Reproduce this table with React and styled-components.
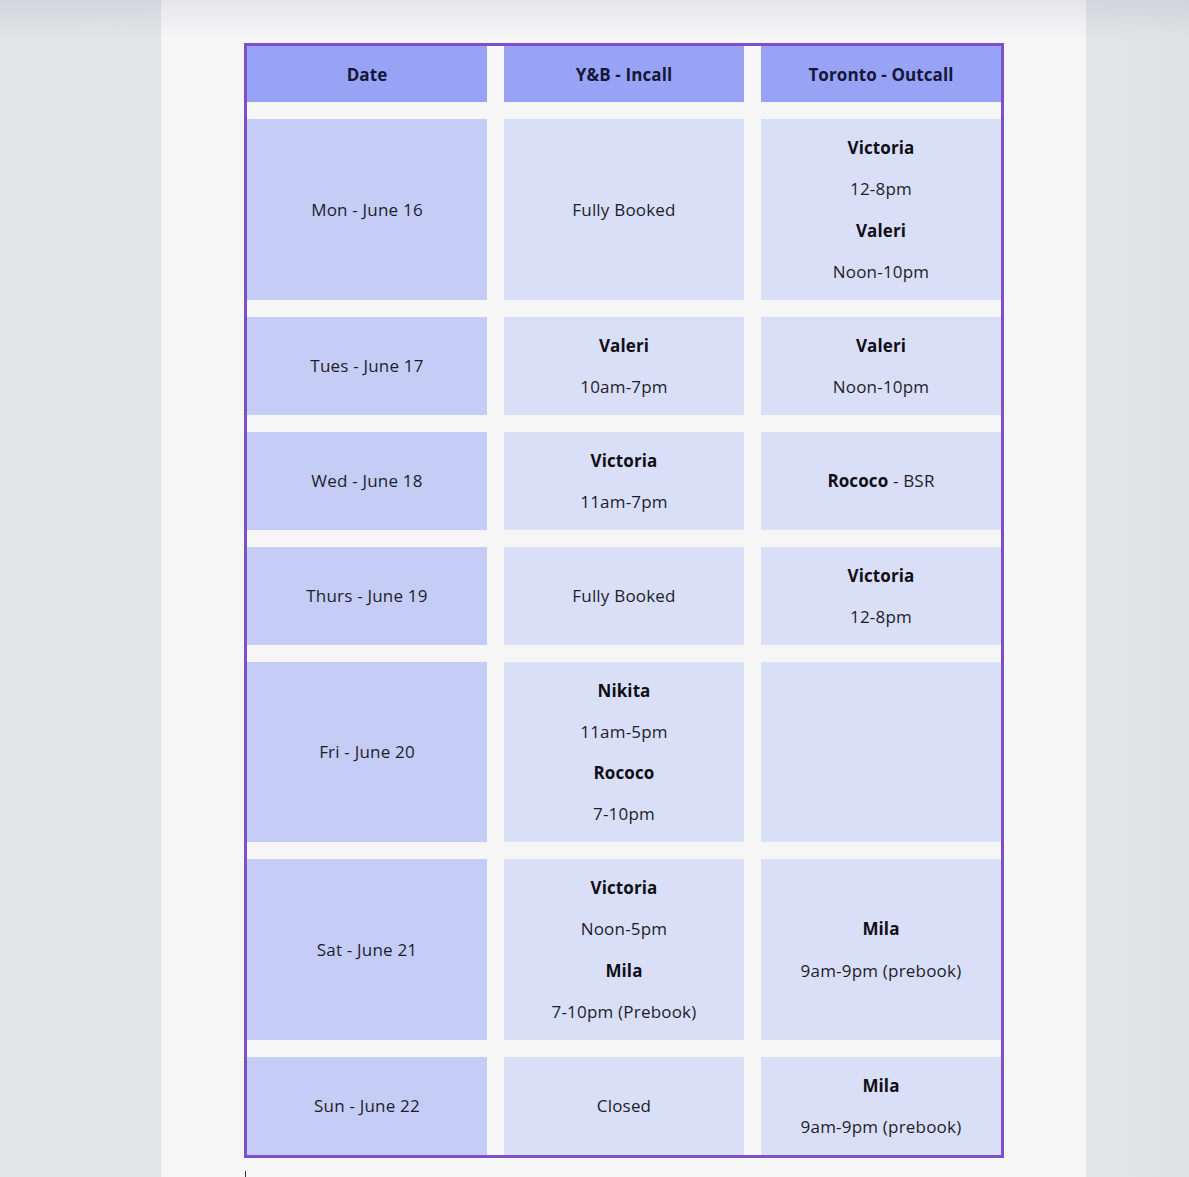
import React from 'react';
import styled, { createGlobalStyle } from 'styled-components';

const GlobalStyle = createGlobalStyle`
  html, body {
    margin: 0;
    padding: 0;
    background: #e5e6ea;
    font-family: 'Open Sans', 'Noto Sans', sans-serif;
  }
`;

const Screen = styled.div`
  position: relative;
  display: grid;
  grid-template-columns: 161px 925px 1fr;
  height: 1177px;
  overflow: hidden;
  background: linear-gradient(to right, #e3e4e8 0%, #e6e7eb 80%, #e1e2e6 100%);

  &::after {
    content: '';
    position: absolute;
    z-index: 2;
    left: 0;
    right: 0;
    top: 0;
    height: 38px;
    background: linear-gradient(to bottom, rgba(60, 64, 90, 0.09), rgba(60, 64, 90, 0));
    pointer-events: none;
  }
`;

const Page = styled.div`
  grid-column: 2;
  background: #f6f6f7;
  padding: 43px 0 0 83px;
`;

const Table = styled.div`
  display: grid;
  grid-template-columns: repeat(3, 240px);
  column-gap: 17px;
  row-gap: 17px;
  width: 754px;
  border: 3px solid #7b50c8;
  background: #f6f6f7;
`;

const HeadCell = styled.div`
  height: 56px;
  display: flex;
  align-items: center;
  justify-content: center;
  background: #98a3f5;
  color: #14163a;
  font-weight: 700;
  font-size: 17px;
  letter-spacing: 0.1px;
`;

const Cell = styled.div`
  display: flex;
  flex-direction: column;
  align-items: center;
  justify-content: center;
  padding: 8px 6px 7.5px;
  min-height: 82.5px;
  background: ${({ $date }) => ($date ? '#c5cdf6' : '#dadff8')};
  color: #1c1d2c;
  font-size: 17px;
  line-height: 41.25px;
  letter-spacing: 0.2px;
  text-align: center;
`;

const Name = styled.b`
  font-weight: 700;
  letter-spacing: 0.1px;
  color: #0e0e16;
`;

const Caret = styled.div`
  width: 1px;
  height: 8px;
  margin: 13px 0 0 1px;
  background: #333;
`;

const schedule = [
  { date: 'Mon - June 16', incall: ['Fully Booked'], outcall: [['Victoria'], '12-8pm', ['Valeri'], 'Noon-10pm'] },
  { date: 'Tues - June 17', incall: [['Valeri'], '10am-7pm'], outcall: [['Valeri'], 'Noon-10pm'] },
  { date: 'Wed - June 18', incall: [['Victoria'], '11am-7pm'], outcall: [['Rococo', ' - BSR']] },
  { date: 'Thurs - June 19', incall: ['Fully Booked'], outcall: [['Victoria'], '12-8pm'] },
  { date: 'Fri - June 20', incall: [['Nikita'], '11am-5pm', ['Rococo'], '7-10pm'], outcall: [] },
  { date: 'Sat - June 21', incall: [['Victoria'], 'Noon-5pm', ['Mila'], '7-10pm (Prebook)'], outcall: [['Mila'], '9am-9pm (prebook)'] },
  { date: 'Sun - June 22', incall: ['Closed'], outcall: [['Mila'], '9am-9pm (prebook)'] },
];

// string = plain line, [name, rest?] = bold name line
const Lines = ({ items }) =>
  items.map((line, i) =>
    typeof line === 'string' ? (
      <div key={i}>{line}</div>
    ) : (
      <div key={i}>
        <Name>{line[0]}</Name>
        {line[1]}
      </div>
    )
  );

export default function App() {
  return (
    <>
      <GlobalStyle />
      <Screen>
        <Page>
          <Table>
            <HeadCell>Date</HeadCell>
            <HeadCell>Y&amp;B - Incall</HeadCell>
            <HeadCell>Toronto - Outcall</HeadCell>
            {schedule.map((row) => (
              <React.Fragment key={row.date}>
                <Cell $date>{row.date}</Cell>
                <Cell><Lines items={row.incall} /></Cell>
                <Cell><Lines items={row.outcall} /></Cell>
              </React.Fragment>
            ))}
          </Table>
          <Caret />
        </Page>
      </Screen>
    </>
  );
}
